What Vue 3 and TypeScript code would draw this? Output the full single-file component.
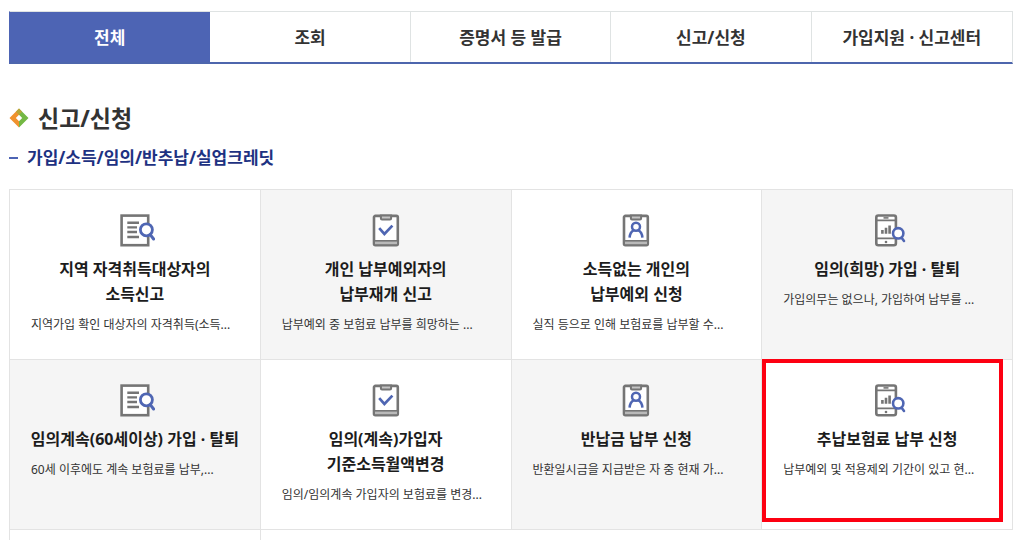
<script setup lang="ts">
import { ref } from 'vue'

type IconName = 'search' | 'check' | 'person' | 'phone'

interface Service {
  icon: IconName
  title: string[]
  desc: string
  marked?: boolean
}

const tabs: string[] = ['전체', '조회', '증명서 등 발급', '신고/신청', '가입지원 · 신고센터']
const active = ref(0)

const services: Service[] = [
  { icon: 'search', title: ['지역 자격취득대상자의', '소득신고'], desc: '지역가입 확인 대상자의 자격취득(소득...' },
  { icon: 'check', title: ['개인 납부예외자의', '납부재개 신고'], desc: '납부예외 중 보험료 납부를 희망하는 ...' },
  { icon: 'person', title: ['소득없는 개인의', '납부예외 신청'], desc: '실직 등으로 인해 보험료를 납부할 수...' },
  { icon: 'phone', title: ['임의(희망) 가입 · 탈퇴'], desc: '가입의무는 없으나, 가입하여 납부를 ...' },
  { icon: 'search', title: ['임의계속(60세이상) 가입 · 탈퇴'], desc: '60세 이후에도 계속 보험료를 납부,...' },
  { icon: 'check', title: ['임의(계속)가입자', '기준소득월액변경'], desc: '임의/임의계속 가입자의 보험료를 변경...' },
  { icon: 'person', title: ['반납금 납부 신청'], desc: '반환일시금을 지급받은 자 중 현재 가...' },
  { icon: 'phone', title: ['추납보험료 납부 신청'], desc: '납부예외 및 적용제외 기간이 있고 현...', marked: true },
]

// Shading alternates in a checkerboard over four columns.
const shaded = (i: number): boolean => (Math.floor(i / 4) + i) % 2 === 1
</script>

<template>
  <main class="page">
    <nav class="tabs">
      <button
        v-for="(tab, i) in tabs"
        :key="tab"
        type="button"
        class="tab"
        :class="{ active: active === i }"
        @click="active = i"
      >{{ tab }}</button>
    </nav>

    <h2 class="heading">
      <svg class="diamond" viewBox="0 0 20 20" aria-hidden="true">
        <path d="M10 0.5 L0.5 10 L10 19.5 L10 13.2 L6.8 10 L10 6.8 Z" fill="#f0922e" />
        <path d="M10 0.5 L19.5 10 L10 19.5 L10 13.2 L13.2 10 L10 6.8 Z" fill="#74b844" />
        <path d="M10 0.5 L13.2 3.7 L10 6.8 L6.8 3.7 Z" fill="#b5a63a" />
      </svg>
      <span>신고/신청</span>
    </h2>
    <h3 class="subheading"><span class="dash"></span>가입/소득/임의/반추납/실업크레딧</h3>

    <ul class="grid">
      <li v-for="(s, i) in services" :key="i" class="card" :class="{ shaded: shaded(i) }">
        <a href="#" class="link">
          <svg class="icon" viewBox="0 0 40 34" fill="none" aria-hidden="true">
            <template v-if="s.icon === 'search'">
              <rect x="6.6" y="2.6" width="26.6" height="29.6" fill="#fff" stroke="#757575" stroke-width="2.6" />
              <path d="M12.3 9.7H24M12.3 14.4H22M12.3 19H22M12.3 24H24" stroke="#757575" stroke-width="2.4" />
              <circle cx="31.4" cy="16.8" r="6" class="lens" stroke="#4f66b3" stroke-width="2.8" />
              <path d="M35.4 21.8L38.6 26" stroke="#4f66b3" stroke-width="3" stroke-linecap="round" />
            </template>
            <template v-else-if="s.icon === 'phone'">
              <rect x="9.3" y="2.5" width="19.6" height="29.8" rx="2" fill="#fff" stroke="#757575" stroke-width="2.6" />
              <path d="M9 7.4H29M9 25.4H29" stroke="#757575" stroke-width="1.8" />
              <path d="M16.5 4.9H21.5" stroke="#757575" stroke-width="1.6" />
              <circle cx="19" cy="29" r="1.3" fill="#757575" />
              <path d="M15.4 20.7V17M19 20.7V14.8M22.6 20.7V12.6" stroke="#757575" stroke-width="2.6" />
              <circle cx="31.2" cy="20.3" r="5.2" class="lens" stroke="#4f66b3" stroke-width="2.6" />
              <path d="M34.6 24.8L37 28" stroke="#4f66b3" stroke-width="2.6" stroke-linecap="round" />
            </template>
            <template v-else>
              <rect x="8" y="2.9" width="23.8" height="29.3" rx="1.4" fill="#fff" stroke="#757575" stroke-width="2.6" />
              <rect x="9" y="27.6" width="21.8" height="3.6" fill="#b9b9b9" />
              <path d="M8 27.8H31.8" stroke="#757575" stroke-width="1.6" />
              <path d="M14.9 2.4H25.1V5.4Q25.1 6.4 24 6.4H16Q14.9 6.4 14.9 5.4Z" fill="#c4c4c4" stroke="#757575" stroke-width="2" />
              <path v-if="s.icon === 'check'" d="M13.2 15.2L18.4 21L26.4 12.6" stroke="#4f66b3" stroke-width="2.7" />
              <template v-else>
                <circle cx="20" cy="13.8" r="4" stroke="#4f66b3" stroke-width="2.5" />
                <path d="M13.6 24.6Q14 19.2 17.8 17.2M26.4 24.6Q26 19.2 22.2 17.2" stroke="#4f66b3" stroke-width="2.5" />
              </template>
            </template>
          </svg>
          <strong class="title"><span v-for="line in s.title" :key="line">{{ line }}</span></strong>
          <span class="desc">{{ s.desc }}</span>
        </a>
        <span v-if="s.marked" class="marker"></span>
      </li>
      <li class="card"></li>
    </ul>
  </main>
</template>

<style>
body {
  margin: 0;
  background: #fff;
}
</style>

<style scoped>
.page {
  box-sizing: border-box;
  height: 100vh;
  overflow: hidden;
  padding: 11px 9px 0;
  font-family: "Noto Sans", "Noto Sans CJK KR", sans-serif;
  color: #333;
}

.tabs {
  display: grid;
  grid-template-columns: repeat(5, 1fr);
  border: 1px solid #dfe3e3;
  border-bottom: 2px solid #4d66ad;
  border-left-color: #4d64b4;
}

.tab {
  height: 50px;
  margin: 0;
  padding: 2px 0 0;
  border: 0;
  border-right: 1px solid #dfe3e3;
  background: #fff;
  color: #333;
  font-family: inherit;
  font-size: 17px;
  font-weight: 700;
  line-height: 24px;
  cursor: pointer;
}

.tab:last-child {
  border-right: 0;
}

.tab.active {
  border-color: #4d64b4;
  background: #4d64b4;
  color: #fff;
}

.heading {
  display: flex;
  align-items: center;
  gap: 9px;
  margin: 38px 0 0;
  font-size: 23px;
  font-weight: 700;
  line-height: 32px;
}

.diamond {
  width: 20px;
  height: 20px;
}

.subheading {
  display: flex;
  align-items: center;
  gap: 9px;
  margin: 12px 0 19px;
  color: #1e3282;
  font-size: 17px;
  font-weight: 700;
  line-height: 24px;
}

.dash {
  width: 9px;
  height: 2px;
  background: #4d64b4;
}

.grid {
  display: grid;
  grid-template-columns: repeat(4, 1fr);
  margin: 0;
  padding: 0;
  border: solid #e3e3e3;
  border-width: 1px 0 0 1px;
  list-style: none;
}

.card {
  position: relative;
  min-width: 0;
  min-height: 169px;
  border: solid #e3e3e3;
  border-width: 0 1px 1px 0;
  background: #fff;
}

.card.shaded {
  background: #f5f5f5;
}

.link {
  display: flex;
  flex-direction: column;
  align-items: center;
  padding: 23px 21px 0;
  color: inherit;
  text-decoration: none;
}

.icon {
  width: 40px;
  height: 34px;
}

.lens {
  fill: #fff;
}

.title {
  display: flex;
  flex-direction: column;
  align-items: center;
  margin-top: 10px;
  color: #1c1c1c;
  font-size: 16px;
  font-weight: 700;
  line-height: 25px;
  white-space: nowrap;
}

.desc {
  align-self: stretch;
  margin-top: 8px;
  font-size: 12px;
  line-height: 20px;
  white-space: nowrap;
}

.marker {
  position: absolute;
  inset: -1px 9px 7px 0;
  border: 4px solid #fd0011;
  pointer-events: none;
}
</style>
